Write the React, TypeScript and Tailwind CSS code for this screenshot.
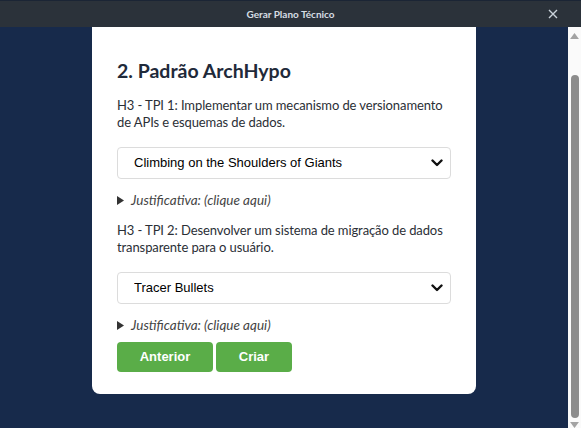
import React from "react";

function Chevron() {
  return (
    <svg width="12" height="8" viewBox="0 0 12 8" className="pointer-events-none absolute right-[8px] top-1/2 -translate-y-1/2">
      <path d="M1.5 1.5 L6 6 L10.5 1.5" fill="none" stroke="#111" strokeWidth="2.4" strokeLinecap="round" strokeLinejoin="round" />
    </svg>
  );
}

function Select({ value }: { value: string }) {
  return (
    <div className="relative h-[32px] w-full">
      <select
        defaultValue={value}
        className="h-full w-full appearance-none rounded-[4px] border border-[#dcdcdc] bg-white pl-[16px] text-[13px] text-black outline-none"
        style={{ fontFamily: '"Liberation Sans", Arial, sans-serif' }}
      >
        <option>{value}</option>
      </select>
      <Chevron />
    </div>
  );
}

function Justificativa({ className }: { className?: string }) {
  return (
    <div className={"flex items-center gap-[7px] leading-[17px] " + (className ?? "")}>
      <svg width="7" height="9" viewBox="0 0 7 9">
        <path d="M0 0 L7 4.5 L0 9 Z" fill="#333" />
      </svg>
      <span className="text-[13.5px] italic text-[#444]">Justificativa: (clique aqui)</span>
    </div>
  );
}

export default function App() {
  return (
    <div className="flex h-[428px] w-[581px] flex-col overflow-hidden bg-[#172a4b]" style={{ fontFamily: 'Lato, "Noto Sans", sans-serif' }}>
      <div className="relative flex h-[27px] shrink-0 items-center justify-center border-t border-[#1b2535] bg-[#2b323a]">
        <span className="text-[10px] font-bold text-[#d6dde4]">Gerar Plano Técnico</span>
        <svg width="10" height="10" viewBox="0 0 10 10" className="absolute right-[23px] top-[8px]">
          <path d="M1 1 L9 9 M9 1 L1 9" stroke="#c9d2da" strokeWidth="1.4" />
        </svg>
      </div>
      <div className="flex min-h-0 flex-1">
        <div className="flex min-w-0 flex-1 justify-center">
          <div className="mb-[34px] h-fit w-[384px] rounded-b-[8px] bg-white px-[25px] pb-[22px] pt-[30px] text-[#2b2f36]">
            <h2 className="text-[19.5px] font-bold leading-[28px] text-[#1f2a3a]">2. Padrão ArchHypo</h2>
            <p className="mt-[12px] text-[13px] leading-[17px] tracking-[-0.1px]">H3 - TPI 1: Implementar um mecanismo de versionamento de APIs e esquemas de dados.</p>
            <div className="mt-[16px]">
              <Select value="Climbing on the Shoulders of Giants" />
            </div>
            <Justificativa className="mt-[13px]" />
            <p className="mt-[13px] text-[13px] leading-[17px] tracking-[-0.1px]">H3 - TPI 2: Desenvolver um sistema de migração de dados transparente para o usuário.</p>
            <div className="mt-[16px]">
              <Select value="Tracer Bullets" />
            </div>
            <Justificativa className="mt-[13px]" />
            <div className="mt-[8px] flex gap-[3px]" style={{ fontFamily: '"Liberation Sans", Arial, sans-serif' }}>
              <button className="h-[30px] w-[96px] rounded-[4px] bg-[#5aad48] text-[13px] font-bold text-white">Anterior</button>
              <button className="h-[30px] w-[76px] rounded-[4px] bg-[#5aad48] text-[13px] font-bold text-white">Criar</button>
            </div>
          </div>
        </div>
        <div className="flex w-[13px] shrink-0 flex-col items-center bg-[#fafafa]">
          <svg width="9" height="6" viewBox="0 0 9 6" className="mt-[6px]">
            <path d="M0 6 L4.5 0 L9 6 Z" fill="#a3a3a3" />
          </svg>
          <div className="mt-[36px] h-[349px] w-[8px] rounded-full bg-[#8c8c8c]" />
          <svg width="9" height="6" viewBox="0 0 9 6" className="mt-[4px]">
            <path d="M0 0 L4.5 6 L9 0 Z" fill="#a3a3a3" />
          </svg>
        </div>
      </div>
    </div>
  );
}
